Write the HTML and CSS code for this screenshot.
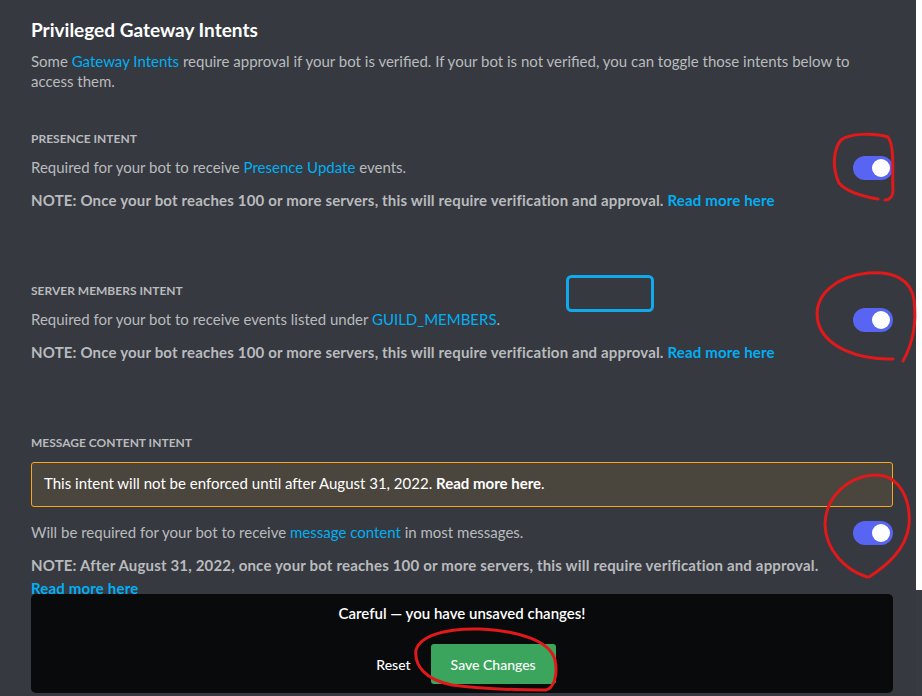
FILE: index.html
```html
<!DOCTYPE html>
<html lang="en">
<head>
<meta charset="utf-8">
<title>Privileged Gateway Intents</title>
<link rel="stylesheet" href="styles.css">
</head>
<body>
<div class="frame">
  <main class="page">
    <h1 class="title">Privileged Gateway Intents</h1>
    <p class="desc">Some <a class="link">Gateway Intents</a> require approval if your bot is verified. If your bot is not verified, you can toggle those intents below to access them.</p>

    <section class="intent">
      <div class="label">Presence Intent</div>
      <div class="row">
        <p class="text">Required for your bot to receive <a class="link">Presence Update</a> events.</p>
        <span class="toggle"><span class="knob"></span></span>
      </div>
      <p class="note">NOTE: Once your bot reaches 100 or more servers, this will require verification and approval. <a class="link">Read more here</a></p>
    </section>

    <section class="intent">
      <div class="label">Server Members Intent</div>
      <div class="row">
        <p class="text">Required for your bot to receive events listed under <a class="link">GUILD_MEMBERS</a>.</p>
        <span class="toggle"><span class="knob"></span></span>
      </div>
      <p class="note">NOTE: Once your bot reaches 100 or more servers, this will require verification and approval. <a class="link">Read more here</a></p>
    </section>

    <section class="intent">
      <div class="label">Message Content Intent</div>
      <div class="warning">This intent will not be enforced until after August 31, 2022. <b>Read more here</b>.</div>
      <div class="row">
        <p class="text">Will be required for your bot to receive <a class="link">message content</a> in most messages.</p>
        <span class="toggle"><span class="knob"></span></span>
      </div>
      <p class="note">NOTE: After August 31, 2022, once your bot reaches 100 or more servers, this will require verification and approval. <a class="link">Read more here</a></p>
    </section>
  </main>
  <div class="edge"></div>
</div>

<div class="save-bar">
  <div class="save-msg">Careful — you have unsaved changes!</div>
  <div class="save-actions">
    <button class="btn-reset">Reset</button>
    <button class="btn-save">Save Changes</button>
  </div>
</div>

<svg class="annot" width="922" height="696" viewBox="0 0 922 696" fill="none">
  <rect x="567.5" y="276.5" width="85" height="34" rx="4" stroke="#12a8ec" stroke-width="3"/>
  <g stroke="#e0191b" stroke-width="3" stroke-linecap="round" stroke-linejoin="round">
    <path d="M878 199 C860 196 845 190 839 183 C832 168 833 150 841 140 C850 133 875 133 888 137 C895 147 892 172 893 190 C893 197 889 200 885 200"/>
    <path d="M893 359 C860 360 825 348 818 322 C812 294 838 276 868 273 C893 271 911 279 914 300 C917 325 912 345 903 361"/>
    <path d="M867 577 C845 570 826 550 825 525 C825 496 850 475 877 475 C900 476 911 500 909 525 C906 550 886 566 869 577"/>
    <path d="M546 690 C554 688 558 675 555 660 C550 641 520 631 480 629 C445 628 420 636 416 650 C414 666 426 680 452 685 C482 689 515 690 546 690"/>
  </g>
</svg>
</body>
</html>
```

FILE: styles.css
```css
html, body {
  margin: 0;
  padding: 0;
}
body {
  width: 922px;
  height: 696px;
  overflow: hidden;
  background: #36393f;
  font-family: "Lato", "Noto Sans", sans-serif;
  position: relative;
}
.frame {
  display: flex;
  height: 696px;
}
.page {
  flex: 1;
  padding: 18px 23px 0 31px;
  box-sizing: border-box;
}
.edge {
  width: 6px;
  flex: none;
  background: linear-gradient(#ffffff 0, #ffffff 590px, #393b42 590px);
}
.title {
  margin: 0;
  font-size: 19px;
  line-height: 24px;
  font-weight: 700;
  color: #ffffff;
}
.desc {
  margin: 9px 0 0;
  font-size: 15px;
  line-height: 20px;
  color: #b9bbbe;
}
.link {
  color: #00aff4;
  text-decoration: none;
}
.intent {
  margin-top: 40px;
}
.intent + .intent {
  margin-top: 71px;
}
.label {
  font-size: 12px;
  line-height: 16px;
  font-weight: 700;
  text-transform: uppercase;
  color: #b9bbbe;
}
.row {
  display: flex;
  align-items: center;
  justify-content: space-between;
  height: 24px;
  margin-top: 9px;
}
.text {
  margin: 0 0 2px;
  font-size: 15px;
  line-height: 20px;
  color: #b9bbbe;
}
.toggle {
  width: 40px;
  height: 24px;
  border-radius: 12px;
  background: #5865f2;
  display: flex;
  align-items: center;
  justify-content: flex-end;
  padding-right: 3px;
  box-sizing: border-box;
  flex: none;
}
.knob {
  width: 18px;
  height: 18px;
  border-radius: 50%;
  background: #ffffff;
}
.note {
  margin: 9px 0 0;
  font-size: 15px;
  line-height: 23px;
  font-weight: 700;
  letter-spacing: 0.17px;
  color: #b9bbbe;
}
.note .link {
  color: #00aff4;
  white-space: nowrap;
}
.warning {
  margin-top: 11px;
  height: 45px;
  box-sizing: border-box;
  border: 1px solid #faa61a;
  border-radius: 3px;
  background: #4a453d;
  color: #ffffff;
  font-size: 15px;
  line-height: 20px;
  padding: 10px 12px;
}
.warning b {
  font-weight: 700;
}
.intent .warning + .row {
  margin-top: 14px;
}
.save-bar {
  position: absolute;
  left: 31px;
  top: 594px;
  width: 862px;
  height: 99px;
  border-radius: 5px;
  background: #090a0c;
  display: flex;
  flex-direction: column;
  align-items: center;
  box-sizing: border-box;
  padding-top: 9px;
}
.save-msg {
  color: #ffffff;
  font-size: 15px;
  line-height: 20px;
  font-weight: 600;
}
.save-actions {
  display: flex;
  align-items: center;
  gap: 20px;
  margin-top: 21px;
  margin-left: 8px;
}
.btn-reset {
  background: none;
  border: 0;
  padding: 0;
  color: #ffffff;
  font-family: inherit;
  font-size: 14px;
  font-weight: 500;
}
.btn-save {
  width: 125px;
  height: 40px;
  border: 0;
  border-radius: 3px;
  background: #3ba55d;
  color: #ffffff;
  font-family: inherit;
  font-size: 14px;
  font-weight: 500;
}
.annot {
  position: absolute;
  left: 0;
  top: 0;
  pointer-events: none;
}
```
